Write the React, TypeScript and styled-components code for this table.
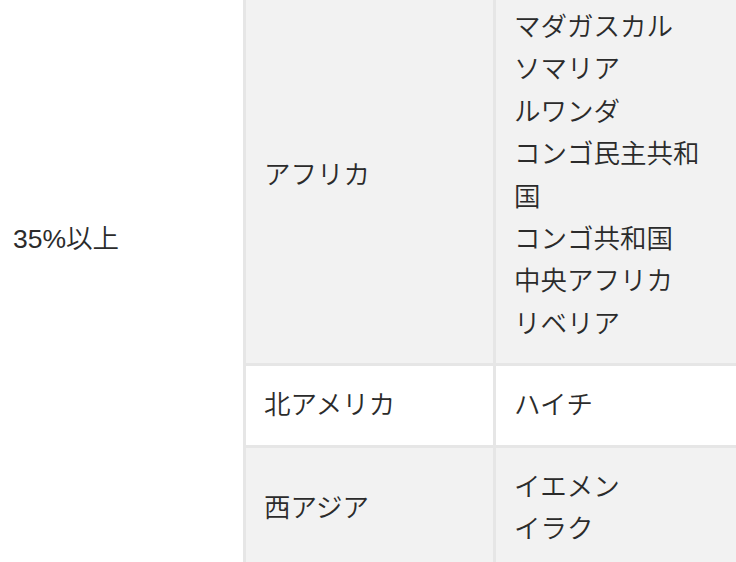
import styled, { createGlobalStyle } from 'styled-components'

const GlobalStyle = createGlobalStyle`
	html, body {
		margin: 0;
		padding: 0;
		background: #ffffff;
		overflow: hidden;
	}
	body {
		font-family: 'Liberation Sans', 'Noto Sans CJK JP', sans-serif;
		color: #2b2b2b;
	}
`

type Region = {
	name: string
	countries: string[]
	shaded: boolean
}

const regions: Region[] = [
	{
		name: 'アフリカ',
		countries: [
			'マダガスカル',
			'ソマリア',
			'ルワンダ',
			'コンゴ民主共和国',
			'コンゴ共和国',
			'中央アフリカ',
			'リベリア',
		],
		shaded: true,
	},
	{ name: '北アメリカ', countries: ['ハイチ'], shaded: false },
	{ name: '西アジア', countries: ['イエメン', 'イラク'], shaded: true },
]

const App = () => {
	return (
		<>
			<GlobalStyle />
			<Table>
				<colgroup>
					<col style={{ width: 246 }} />
					<col style={{ width: 250 }} />
					<col style={{ width: 250 }} />
				</colgroup>
				<tbody>
					{regions.map((region, i) => (
						<Row key={region.name} $shaded={region.shaded}>
							{i === 0 && (
								<RateCell rowSpan={regions.length}>35%以上</RateCell>
							)}
							<Cell>{region.name}</Cell>
							<Cell>
								{region.countries.map((c) => (
									<Country key={c}>{c}</Country>
								))}
							</Cell>
						</Row>
					))}
				</tbody>
			</Table>
		</>
	)
}

export default App

const Table = styled.table`
	table-layout: fixed;
	width: 746px;
	margin-top: -12px;
	border-collapse: separate;
	border-spacing: 0;
	font-size: 26.5px;
	font-weight: 350;
	line-height: 1.6;
`

const Row = styled.tr<{ $shaded: boolean }>`
	background: ${({ $shaded }) => ($shaded ? '#f2f2f2' : '#ffffff')};
`

const Cell = styled.td`
	padding: 18px 18px;
	border-right: 3px solid #e6e6e6;
	border-bottom: 3px solid #e6e6e6;
	vertical-align: middle;
	text-align: left;
`

const RateCell = styled(Cell)`
	background: #ffffff;
	padding: 18px 13px 98px 13px;
	border-bottom: none;
`

const Country = styled.div`
	word-break: break-all;
`
